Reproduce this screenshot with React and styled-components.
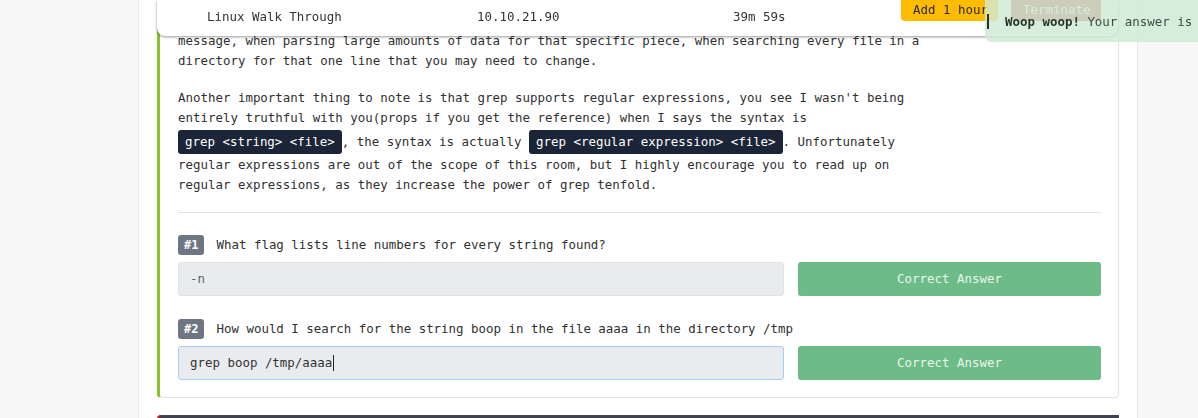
import styled, { createGlobalStyle } from 'styled-components'

const GlobalStyle = createGlobalStyle`
    html, body {
        margin: 0;
        padding: 0;
        background: #f7f7f7;
        overflow: hidden;
    }
    body {
        font-family: "DejaVu Sans Mono", "Liberation Mono", monospace;
        font-size: 12.45px;
        color: #333;
    }
`

const Page = styled.div`
    height: 418px;
    overflow: hidden;
`

const Main = styled.main`
    margin-left: 138px;
    width: 962px;
    min-height: 418px;
    padding: 0 18px;
    background: #fff;
    border-left: 1px solid #e8e8e8;
    border-right: 1px solid #e8e8e8;
`

const TaskCard = styled.section`
    margin-top: -41px;
    padding: 50px 17px 17px 18px;
    border: 1px solid #e4e4e4;
    border-left: 3px solid #88c425;
    border-radius: 0 0 4px 4px;
    background: #fff;
`

const Paragraph = styled.p`
    max-width: 760px;
    margin: 0 0 16px;
    line-height: 20.5px;
    color: #303030;
`

const Code = styled.code`
    display: inline-block;
    font-family: inherit;
    font-size: inherit;
    line-height: 20px;
    margin: 1px 0;
    padding: 2px 7px;
    border-radius: 3px;
    background: #1c2538;
    color: #fff;
`

const Rule = styled.hr`
    border: 0;
    border-top: 1px solid #e2e2e2;
    margin: 13px 0 22px;
`

const Question = styled.div`
    & + & {
        margin-top: 23px;
    }
`

const QuestionHead = styled.div`
    display: flex;
    align-items: center;
    gap: 12px;
    margin-bottom: 7px;
    color: #303030;
`

const Badge = styled.span`
    display: inline-flex;
    align-items: center;
    justify-content: center;
    height: 20px;
    padding: 0 6px;
    border-radius: 3px;
    background: #6f7683;
    color: #fff;
    font-weight: bold;
    font-size: 12px;
`

const AnswerRow = styled.div`
    display: grid;
    grid-template-columns: 2fr 1fr;
    gap: 14px;
`

const AnswerInput = styled.div`
    height: 34px;
    box-sizing: border-box;
    display: flex;
    align-items: center;
    padding: 0 11px;
    border: 1px solid ${p => (p.$focused ? '#a9cdf3' : '#e0e3e7')};
    border-radius: 3px;
    background: #e9ecef;
    color: ${p => (p.$focused ? '#333' : '#5b6068')};
`

const Caret = styled.span`
    display: inline-block;
    width: 1px;
    height: 16px;
    margin-left: 1px;
    background: #222;
`

const AnswerButton = styled.button`
    height: 34px;
    border: 0;
    border-radius: 3px;
    background: #6dbb87;
    color: #eaf6ee;
    font-family: inherit;
    font-size: 12.45px;
`

const NextTask = styled.div`
    margin-top: 17px;
    height: 40px;
    border-left: 3px solid #c0161b;
    border-radius: 4px 0 0 0;
    background: #3e4350;
`

const RoomBar = styled.div`
    position: fixed;
    top: 0;
    left: 157px;
    width: 961px;
    height: 36px;
    display: flex;
    align-items: flex-start;
    background: #fff;
    border-radius: 0 0 8px 8px;
    box-shadow: 0 1px 3px rgba(0, 0, 0, 0.4);
`

const BarCell = styled.span`
    flex: 0 0 ${p => p.$w}px;
    padding-top: 9px;
    line-height: 16px;
    color: #333;
`

const BarButton = styled.button`
    flex: 0 0 ${p => p.$w}px;
    margin-top: -12px;
    margin-right: 13px;
    height: 33px;
    padding: 10px 0 0 12px;
    border: 0;
    border-radius: 0 0 4px 4px;
    background: ${p => p.$bg};
    color: ${p => p.$color};
    font-family: inherit;
    font-size: 12.45px;
    line-height: 16px;
    text-align: left;
    white-space: nowrap;
`

const Toast = styled.div`
    position: fixed;
    top: -8px;
    left: 985px;
    width: 260px;
    height: 50px;
    display: flex;
    align-items: center;
    padding-top: 8px;
    box-sizing: border-box;
    border-radius: 6px;
    background: rgba(206, 234, 213, 0.82);
    color: #3c4a41;
    white-space: nowrap;
    strong {
        color: #26352b;
    }
`

const ToastMark = styled.span`
    display: block;
    flex: 0 0 2px;
    height: 15px;
    margin: 0 16px 0 2px;
    background: #2a2f2c;
`

function AnswerBlock(props) {
    return (
        <Question>
            <QuestionHead>
                <Badge>#{props.number}</Badge>
                <span>{props.question}</span>
            </QuestionHead>
            <AnswerRow>
                <AnswerInput $focused={props.focused}>
                    {props.answer}
                    {props.focused ? <Caret /> : null}
                </AnswerInput>
                <AnswerButton>Correct Answer</AnswerButton>
            </AnswerRow>
        </Question>
    )
}

export default function App() {
    return (
        <Page>
            <GlobalStyle />
            <Main>
                <TaskCard>
                    <Paragraph>
                        This will be useful for many things, like finding the line of an error in a log file or an error
                        message, when parsing large amounts of data for that specific piece, when searching every file in a
                        directory for that one line that you may need to change.
                    </Paragraph>
                    <Paragraph>
                        Another important thing to note is that grep supports regular expressions, you see I wasn't being
                        entirely truthful with you(props if you get the reference) when I says the syntax is{' '}
                        <Code>grep &lt;string&gt; &lt;file&gt;</Code>, the syntax is actually{' '}
                        <Code>grep &lt;regular expression&gt; &lt;file&gt;</Code>. Unfortunately regular expressions are
                        out of the scope of this room, but I highly encourage you to read up on regular expressions, as they
                        increase the power of grep tenfold.
                    </Paragraph>
                    <Rule />
                    <AnswerBlock number={1} question='What flag lists line numbers for every string found?' answer='-n' />
                    <AnswerBlock
                        number={2}
                        question='How would I search for the string boop in the file aaaa in the directory /tmp'
                        answer='grep boop /tmp/aaaa'
                        focused
                    />
                </TaskCard>
                <NextTask />
            </Main>

            <RoomBar>
                <BarCell $w={50} />
                <BarCell $w={270}>Linux Walk Through</BarCell>
                <BarCell $w={256}>10.10.21.90</BarCell>
                <BarCell $w={168}>39m 59s</BarCell>
                <BarButton $w={97} $bg='#ffbb00' $color='#2a2a2a'>Add 1 hour</BarButton>
                <BarButton $w={90} $bg='#c94b4b' $color='#f4f4f4'>Terminate</BarButton>
            </RoomBar>

            <Toast>
                <ToastMark />
                <span><strong>Woop woop!</strong> Your answer is correct</span>
            </Toast>
        </Page>
    )
}
